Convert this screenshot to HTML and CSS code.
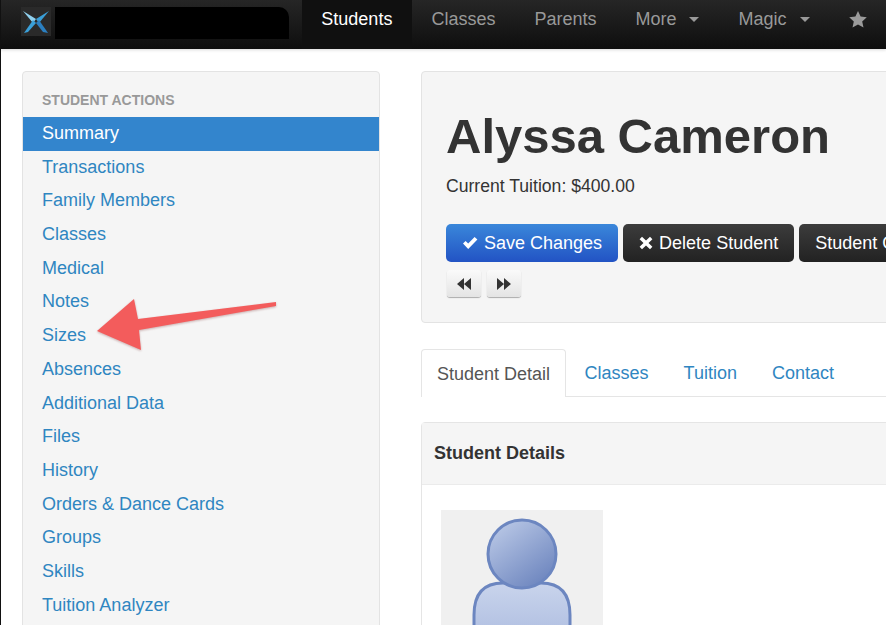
FILE: index.html
```html
<!DOCTYPE html>
<html lang="en">
<head>
  <meta charset="UTF-8">
  <meta name="viewport" content="width=device-width, initial-scale=1.0">
  <title>Alyssa Cameron</title>
  <link rel="stylesheet" href="styles.css">
</head>
<body>

  <nav class="navbar">
    <div class="brand">
      <div class="brand-logo">
        <svg width="30" height="29" viewBox="0 0 30 29">
          <path d="M2 4 L15 12 L12 16 Z" fill="#8fd0ee"/>
          <path d="M28 4 L15 12 L18 16 Z" fill="#3a9fd8"/>
          <path d="M12 13 L15 16 L7 25 L3 26 Z" fill="#3a9fd8"/>
          <path d="M18 13 L15 16 L22 25 L27 26 Z" fill="#2b7fc0"/>
        </svg>
      </div>
      <div class="brand-name"></div>
    </div>
    <ul class="nav-links">
      <li class="nav-item active">Students</li>
      <li class="nav-item">Classes</li>
      <li class="nav-item">Parents</li>
      <li class="nav-item">More <span class="caret"></span></li>
      <li class="nav-item">Magic <span class="caret"></span></li>
      <li class="nav-item">
        <svg class="star" width="18" height="17" viewBox="0 0 18 17"><path d="M9 0 L11.6 5.6 L17.8 6.3 L13.2 10.4 L14.5 16.6 L9 13.4 L3.5 16.6 L4.8 10.4 L0.2 6.3 L6.4 5.6 Z" fill="#9a9a9a"/></svg>
      </li>
    </ul>
  </nav>

  <div class="page">
    <aside class="sidebar">
      <h5 class="sidebar-title">STUDENT ACTIONS</h5>
      <a class="side-link active">Summary</a>
      <a class="side-link">Transactions</a>
      <a class="side-link">Family Members</a>
      <a class="side-link">Classes</a>
      <a class="side-link">Medical</a>
      <a class="side-link">Notes</a>
      <a class="side-link">Sizes</a>
      <a class="side-link">Absences</a>
      <a class="side-link">Additional Data</a>
      <a class="side-link">Files</a>
      <a class="side-link">History</a>
      <a class="side-link">Orders &amp; Dance Cards</a>
      <a class="side-link">Groups</a>
      <a class="side-link">Skills</a>
      <a class="side-link">Tuition Analyzer</a>
    </aside>

    <main class="main">
      <section class="hero">
        <h1>Alyssa Cameron</h1>
        <p class="tuition">Current Tuition: $400.00</p>
        <div class="btn-row">
          <button class="btn btn-blue">
            <svg width="16" height="14" viewBox="0 0 16 14"><path d="M1 7.5 L3.6 5 L6.2 7.6 L12.6 1 L15.4 3.6 L6.2 13 Z" fill="#fff"/></svg>
            Save Changes
          </button>
          <button class="btn btn-dark">
            <svg width="14" height="14" viewBox="0 0 14 14"><path d="M3 .8 L7 4.6 L11 .8 L13.4 3.2 L9.5 7 L13.4 10.8 L11 13.2 L7 9.4 L3 13.2 L.6 10.8 L4.5 7 L.6 3.2 Z" fill="#fff"/></svg>
            Delete Student
          </button>
          <button class="btn btn-dark">Student Options</button>
        </div>
        <div class="btn-row small-row">
          <button class="btn-small">
            <svg width="14" height="12" viewBox="0 0 14 12"><path d="M7 0 V12 L0 6 Z M14 0 V12 L7 6 Z" fill="#333"/></svg>
          </button>
          <button class="btn-small">
            <svg width="14" height="12" viewBox="0 0 14 12"><path d="M0 0 V12 L7 6 Z M7 0 V12 L14 6 Z" fill="#333"/></svg>
          </button>
        </div>
      </section>

      <ul class="tabs">
        <li class="tab active">Student Detail</li>
        <li class="tab">Classes</li>
        <li class="tab">Tuition</li>
        <li class="tab">Contact</li>
      </ul>

      <section class="panel">
        <div class="panel-head">Student Details</div>
        <div class="panel-body">
          <div class="avatar">
            <svg width="162" height="162" viewBox="0 0 162 162">
              <defs>
                <linearGradient id="headFill" x1="0.2" y1="0.1" x2="0.8" y2="0.9">
                  <stop offset="0" stop-color="#b4c3e3"/>
                  <stop offset="1" stop-color="#7088c0"/>
                </linearGradient>
                <linearGradient id="bodyFill" x1="0" y1="0" x2="0" y2="1">
                  <stop offset="0" stop-color="#c9d4ec"/>
                  <stop offset="1" stop-color="#9fb1da"/>
                </linearGradient>
              </defs>
              <path d="M33 162 V105 Q33 73 62 73 H100 Q129 73 129 105 V162 Z" fill="url(#bodyFill)" stroke="#6c86c0" stroke-width="3"/>
              <circle cx="81" cy="44" r="34" fill="url(#headFill)" stroke="#6c86c0" stroke-width="3"/>
            </svg>
          </div>
        </div>
      </section>
    </main>

    <svg class="arrow" width="190" height="60" viewBox="0 0 190 60">
      <path d="M1 37 L38 5 L42 25 L180 8 L180 12 L43 36 L45 56 Z" fill="#f35c5c"/>
    </svg>
  </div>

</body>
</html>
```

FILE: styles.css
```css
html, body {
  height: 100%;
}
body {
  margin: 0;
  overflow: hidden;
  font-family: "Liberation Sans", Arial, sans-serif;
  font-size: 18px;
  color: #333;
  background-color: #fff;
  border-left: 1px solid #111;
}

/* top bar */
.navbar {
  display: flex;
  height: 49px;
  margin-left: -1px;
  background: linear-gradient(#262626, #0e0e0e);
  box-shadow: 0 1px 3px rgba(0, 0, 0, 0.15);
}
.brand {
  display: flex;
  gap: 4px;
  width: 305px;
  padding: 7px 0 0 21px;
  box-sizing: border-box;
}
.brand-logo {
  width: 30px;
  height: 29px;
  background-color: #2a2a2a;
}
.brand-name {
  width: 234px;
  height: 32px;
  background-color: #000;
  border-radius: 0 10px 0 0;
}
.nav-links {
  display: flex;
  margin: 0;
  padding: 0;
  list-style: none;
}
.nav-item {
  display: flex;
  align-items: center;
  gap: 8px;
  padding: 0 19.5px 10px;
  color: #999;
  white-space: pre;
}
.nav-item.active {
  background-color: #101010;
  color: #fff;
}
.caret {
  width: 0;
  height: 0;
  border-left: 5px solid transparent;
  border-right: 5px solid transparent;
  border-top: 5px solid #999;
}

/* page layout */
.page {
  position: relative;
  display: flex;
  gap: 41px;
  align-items: flex-start;
  padding: 22px 0 0 21px;
}

.sidebar {
  flex: none;
  width: 358px;
  box-sizing: border-box;
  padding: 19px 0 40px;
  background-color: #f5f5f5;
  border: 1px solid #e3e3e3;
  border-radius: 4px;
}
.sidebar-title {
  margin: 0 0 7px;
  padding: 0 19px;
  height: 19px;
  line-height: 19px;
  font-size: 14px;
  font-weight: bold;
  color: #999;
}
.side-link {
  display: block;
  height: 33.7px;
  line-height: 33.7px;
  padding: 0 19px;
  color: #2f86c1;
}
.side-link.active {
  background-color: #3385cd;
  color: #fff;
}

.main {
  flex: none;
  width: 700px;
}
.hero {
  height: 252px;
  box-sizing: border-box;
  padding: 34px 24px 0;
  background-color: #f5f5f5;
  border: 1px solid #e3e3e3;
  border-radius: 4px;
}
.hero h1 {
  margin: 0;
  font-size: 49px;
  line-height: 60px;
  color: #333;
}
.tuition {
  margin: 7px 0 0;
  font-size: 17.6px;
  line-height: 26px;
}
.btn-row {
  display: flex;
  gap: 5px;
  margin-top: 25px;
}
.small-row {
  gap: 6px;
  margin-top: 8px;
  padding-left: 1px;
}
.btn {
  display: flex;
  align-items: center;
  gap: 6px;
  height: 38px;
  padding: 0 16px;
  border: none;
  border-radius: 5px;
  font-family: inherit;
  font-size: 18px;
  color: #fff;
  white-space: nowrap;
}
.btn-blue {
  background: linear-gradient(#3a87da, #2253c4);
}
.btn-dark {
  background: linear-gradient(#3c3c3c, #222);
}
.btn-small {
  display: flex;
  align-items: center;
  justify-content: center;
  width: 34px;
  height: 27px;
  padding: 0;
  border: none;
  border-radius: 3px;
  background: linear-gradient(#fafafa, #e4e4e4);
  box-shadow: 0 1px 1px rgba(0, 0, 0, 0.3);
}

/* tabs */
.tabs {
  display: flex;
  height: 48px;
  box-sizing: border-box;
  margin: 26px 0 25px;
  padding: 0;
  list-style: none;
  border-bottom: 1px solid #e5e5e5;
}
.tab {
  height: 47px;
  line-height: 48px;
  padding: 0 17.5px;
  color: #2f86c1;
}
.tab.active {
  height: 48px;
  box-sizing: border-box;
  padding: 0 15px;
  margin-right: 1px;
  line-height: 48px;
  background-color: #fff;
  color: #555;
  border: 1px solid #e5e5e5;
  border-bottom: none;
  border-radius: 4px 4px 0 0;
}

/* details panel */
.panel {
  border: 1px solid #e5e5e5;
  border-radius: 4px 0 0 0;
}
.panel-head {
  height: 61px;
  line-height: 61px;
  padding: 0 12px;
  font-weight: bold;
  background-color: #f5f5f5;
  border-bottom: 1px solid #ebebeb;
}
.panel-body {
  padding: 25px 19px;
}
.avatar {
  width: 162px;
  height: 162px;
  background-color: #f0f0f0;
}

.arrow {
  position: absolute;
  left: 95px;
  top: 245px;
  filter: drop-shadow(0 1px 1px rgba(120, 40, 40, 0.35));
}
```
